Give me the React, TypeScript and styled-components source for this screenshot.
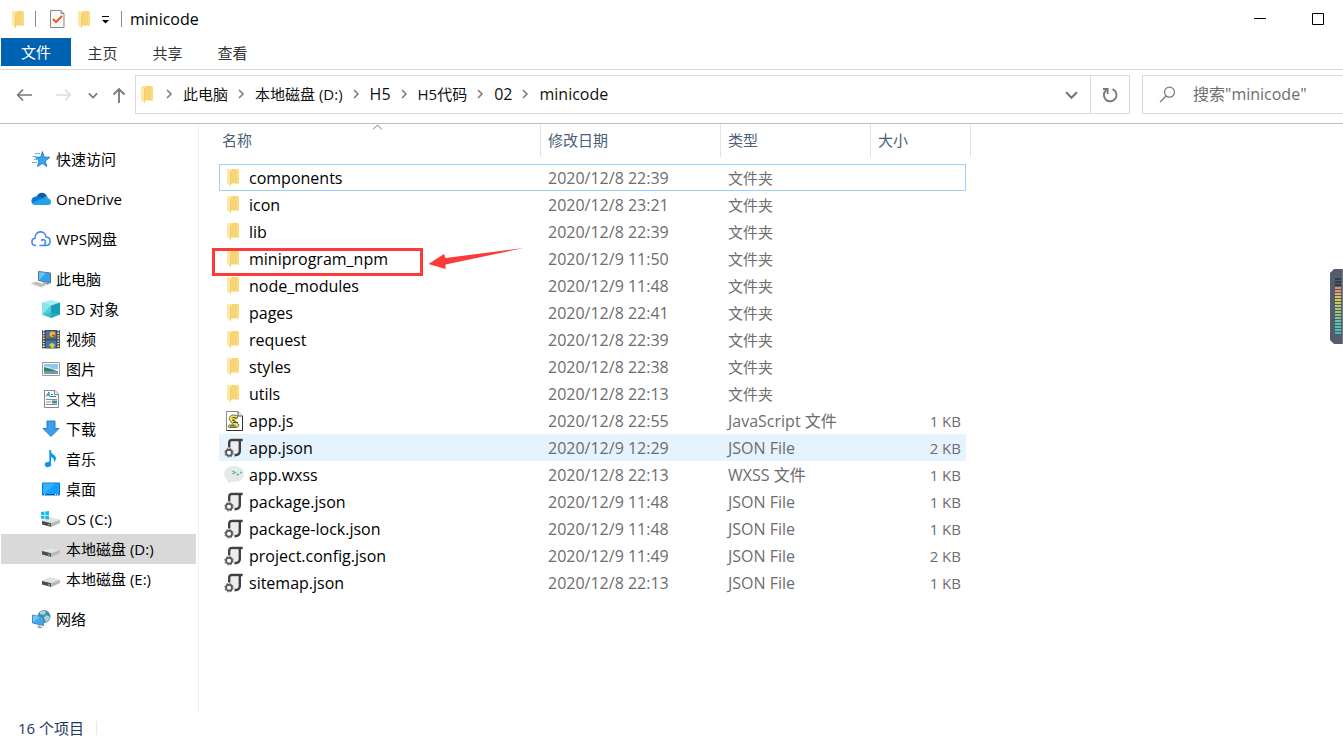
import React from "react";
import styled, { createGlobalStyle } from "styled-components";

const GlobalStyle = createGlobalStyle`
  * { box-sizing: border-box; }
  html, body { margin: 0; background: #fff; overflow: hidden; }
  body, button, input {
    font-family: "Open Sans", "Noto Sans CJK SC", sans-serif;
    font-size: 15px;
    line-height: 20px;
    color: #000;
  }
  button { border: 0; background: none; padding: 0; }
`;

const Window = styled.div`
  position: relative;
  display: flex;
  flex-direction: column;
  min-height: 100vh;
  background: #fff;
`;

const TitleBar = styled.header`
  display: flex;
  align-items: center;
  height: 38px;
  padding-left: 12px;
`;

const QuickTools = styled.div`
  display: flex;
  align-items: center;
  gap: 11px;
`;

const Separator = styled.span<{ $light?: boolean }>`
  width: 1px;
  height: ${(p) => (p.$light ? 14 : 16)}px;
  background: ${(p) => (p.$light ? "#e8e8e8" : "#8a8a8a")};
`;

const Title = styled.h1`
  margin: 0 auto 0 8px;
  font-size: 16px;
  font-weight: 400;
  line-height: 20px;
`;

const WindowButtons = styled.div`
  display: flex;
  gap: 8px;
`;

const WindowButton = styled.button`
  display: flex;
  align-items: center;
  justify-content: center;
  width: 50px;
  height: 38px;
`;

const Ribbon = styled.nav`
  display: flex;
  height: 32px;
  padding-left: 1px;
  border-bottom: 1px solid #d9d9d9;
`;

const RibbonTab = styled.button<{ $primary?: boolean }>`
  width: ${(p) => (p.$primary ? 70 : 65)}px;
  height: 28px;
  padding: ${(p) => (p.$primary ? "0" : "2px 2px 0 0")};
  background: ${(p) => (p.$primary ? "#0063b1" : "transparent")};
  color: ${(p) => (p.$primary ? "#fff" : "#333")};
`;

const AddressRow = styled.div`
  display: flex;
  align-items: center;
  height: 54px;
  padding: 0 0 4px 14px;
  border-bottom: 1px solid #bcbcbc;
`;

const NavButtons = styled.div`
  display: flex;
  align-items: center;
  gap: 12px;
  width: 121px;
`;

const IconButton = styled.button`
  display: flex;
  align-items: center;
  justify-content: center;
`;

const AddressBox = styled.div`
  display: flex;
  align-items: center;
  flex: 1;
  height: 39px;
  border: 1px solid #d9d9d9;
  padding-left: 5px;
`;

const Crumbs = styled.ol`
  display: flex;
  align-items: center;
  flex: 1;
  margin: 0;
  padding: 0 0 2px 3px;
  list-style: none;
`;

const Crumb = styled.li<{ $latin?: boolean }>`
  display: flex;
  align-items: center;
  font-size: ${(p) => (p.$latin ? 16 : 15)}px;
  svg { margin: 0 10px 0 9px; }
`;

const CrumbLink = styled.a`
  color: #111;
  text-decoration: none;
`;

const DropButton = styled(IconButton)`
  width: 38px;
  height: 37px;
`;

const RefreshButton = styled(IconButton)`
  width: 39px;
  height: 37px;
  border-left: 1px solid #d9d9d9;
`;

const SearchBox = styled.label`
  display: flex;
  align-items: center;
  gap: 17px;
  width: 201px;
  height: 39px;
  margin-left: 12px;
  padding-left: 16px;
  border: 1px solid #d9d9d9;
  border-right: 0;
`;

const SearchInput = styled.input`
  flex: 1;
  min-width: 0;
  padding: 0 0 2px;
  border: 0;
  outline: 0;
  background: none;
  font-size: 16px;
  &::placeholder { color: #6d6d6d; opacity: 1; }
`;

const Body = styled.div`
  display: flex;
  flex: 1;
`;

const Sidebar = styled.nav`
  width: 199px;
  padding: 20px 2px 0 1px;
  border-right: 1px solid #f0f0f0;
`;

const NavList = styled.ul`
  margin: 0;
  padding: 0;
  list-style: none;
`;

const NavItem = styled.li<{ $group?: boolean }>`
  margin-bottom: ${(p) => (p.$group ? 10 : 0)}px;
`;

const NavLink = styled.a<{ $level: number; $active?: boolean }>`
  display: flex;
  align-items: center;
  gap: 5px;
  height: 30px;
  padding-left: ${(p) => (p.$level ? 40 : 30)}px;
  background: ${(p) => (p.$active ? "#d9d9d9" : "transparent")};
  color: #000;
  text-decoration: none;
`;

const Content = styled.main`
  flex: 1;
  padding-left: 20px;
`;

const FileTable = styled.table`
  width: 747px;
  table-layout: fixed;
  border-collapse: separate;
  border-spacing: 0;
`;

const Col = styled.col<{ $w: number }>`
  width: ${(p) => p.$w}px;
`;

const HeadCell = styled.th<{ $first?: boolean; $last?: boolean }>`
  position: relative;
  height: 40px;
  padding: 0 0 8px ${(p) => (p.$first ? 3 : 7)}px;
  font-weight: 400;
  text-align: left;
  color: #4c607a;
  &::after {
    content: "";
    position: absolute;
    top: 0;
    right: ${(p) => (p.$last ? -5 : 0)}px;
    width: 1px;
    height: 33px;
    background: #e2e2e2;
  }
`;

const SortMark = styled.svg`
  position: absolute;
  top: 0;
  left: 153px;
`;

const Row = styled.tr<{ $focused?: boolean; $hover?: boolean }>`
  background: ${(p) => (p.$hover ? "#e5f3ff" : "transparent")};
  outline: ${(p) => (p.$focused ? "1px solid #99d1ff" : "none")};
  outline-offset: -1px;
`;

const Cell = styled.td<{ $large?: boolean; $right?: boolean }>`
  position: relative;
  height: 27px;
  padding: ${(p) => (p.$right ? "0 5px 0 0" : "0 0 0 7px")};
  font-size: ${(p) => (p.$large ? 16 : 15)}px;
  text-align: ${(p) => (p.$right ? "right" : "left")};
  color: #6d6d6d;
`;

const NameCell = styled(Cell)`
  padding: 0 0 0 5px;
  color: #000;
`;

const FileName = styled.div`
  display: flex;
  align-items: center;
  gap: 5px;
  height: 27px;
`;

const MarkBox = styled.div`
  position: absolute;
  z-index: 1;
  top: 3px;
  left: -7px;
  width: 211px;
  height: 28px;
  border: 3px solid #fb3a3a;
`;

const MarkArrow = styled.svg`
  position: absolute;
  z-index: 1;
  top: 2px;
  left: 209px;
`;

const StatusBar = styled.footer`
  display: flex;
  align-items: center;
  gap: 12px;
  height: 31px;
  padding: 0 0 2px 18px;
  color: #1e395b;
`;

const LevelMeter = styled.aside`
  position: absolute;
  top: 269px;
  right: 0;
`;

const FolderShape = () => (
  <>
    <path d="M4 0H10.5L12 1.5V14.5H4z" fill="#f8d574" />
    <path d="M10 0H11.5V9L12 10V14.5H10z" fill="#fbdc85" />
    <path d="M0 0H5L4 2.5V17L0 14.5z" fill="#fde8a8" />
    <path d="M4 2.5V17L3.2 16.6V2z" fill="#efc766" />
  </>
);

const Folder = () => (
  <svg width="12" height="17" viewBox="0 0 12 17"><FolderShape /></svg>
);

type FileKind = "folder" | "js" | "json" | "wxss";

const FileIcon = ({ kind }: { kind: FileKind }) => (
  <svg width="20" height="20" viewBox="0 0 20 20">
    {kind === "folder" && <g transform="translate(3 1)"><FolderShape /></g>}
    {kind === "js" && (
      <>
        <path d="M2.5 .5H14L18.5 5V19.5H2.5z" fill="#fff" stroke="#8a8a8a" />
        <path d="M18.5 5V19.5H2.5" fill="none" stroke="#333" />
        <path d="M14 .5V5H18.5" fill="#eee" stroke="#555" />
        <path d="M6 5.5C7 3.5 12 3.5 14 5.5L12.5 8C10 7 9 8 10 9.5L14.5 13C15.5 15 14 16.5 12 16.5H5C4 16.5 4 14 5.5 14H9.5L6 9.5C5 8 5 7 6 5.5z" fill="#ece44e" stroke="#6d6b39" />
        <path d="M8.5 6.5L12.5 7M8 9L12 10.5M9 11.5H14M6 15H12" stroke="#4d4c38" fill="none" />
      </>
    )}
    {kind === "json" && (
      <>
        <path d="M6.5 4H15V15L11 17L6.5 11z" fill="#ededf0" />
        <path d="M5.2 9.5V5Q5.2 2 8.2 2H18.7M15.8 2.5V13Q15.8 17 10.5 17.2" fill="none" stroke="#414141" strokeWidth="2.4" />
        <circle cx="5" cy="14.7" r="3" fill="#fff" stroke="#5a5a5a" strokeWidth="1.9" />
        <circle cx="5" cy="14.7" r="4.3" fill="none" stroke="#6a6a6a" strokeWidth="1" strokeDasharray="1.7 1.68" />
      </>
    )}
    {kind === "wxss" && (
      <>
        <path d="M10 1C15.5 1 20 3.8 20 9C20 14 15.5 17 10 17Q8.5 17 7 16.7L3.5 18.5V15C1.5 13.7 0 11.5 0 9C0 4 4.5 1 10 1z" fill="#e8e8e8" />
        <path d="M8.5 6L11 7.5L8.5 9M12.5 9.5H15M16 7.5H18" fill="none" stroke="#35c98a" strokeWidth="1.4" />
      </>
    )}
  </svg>
);

const Chevron = () => (
  <svg width="8" height="10" viewBox="0 0 8 10">
    <path d="M2 1L6 5L2 9" fill="none" stroke="#777" strokeWidth="1.5" />
  </svg>
);

const DownChevron = ({ size }: { size: number }) => (
  <svg width={size} height={size} viewBox="0 0 12 12">
    <path d="M1 4L6 9L11 4" fill="none" stroke="#777" strokeWidth="2" />
  </svg>
);

const Drive = () => (
  <>
    <path d="M1 12L9 8.5L19 11V14L10.5 18L1 15.5z" fill="#b9b9b9" />
    <path d="M1 12L9 8.5L19 11L10 14.3z" fill="#e2e2e2" />
    <path d="M1 12L10 14.3V17.8L1 15.4z" fill="#4c4c4c" />
    <path d="M7 15.5L9 16" stroke="#47d147" strokeWidth="1.5" />
  </>
);

type NavKind =
  | "star" | "onedrive" | "wps" | "pc" | "cube" | "video" | "picture" | "doc"
  | "download" | "music" | "desktop" | "os" | "drive" | "network";

const navArt: Record<NavKind, React.ReactNode> = {
  star: (
    <>
      <path d="M11.5 2.5L13.2 8L19 8.3L14.3 12L16 17.5L11.3 14.5L6.5 17.5L8 12L4.5 8.3L9.7 8z" fill="#36a3ea" stroke="#1779c4" strokeWidth=".8" />
      <path d="M4 4.5H9M1.5 7.5H5M3 10.5H7M1 13.5H6" stroke="#58b5ee" strokeWidth="1" />
    </>
  ),
  onedrive: (
    <>
      <path d="M5.5 8C7 3 14 2 16 7.5L11 12z" fill="#0a5cad" />
      <path d="M5 7.5C7.5 6.5 9.5 8 13 10L5 16H4C-1 15.5-1 8 5 7.5z" fill="#0f78d4" />
      <path d="M12 9.5C14 6.5 17 7 17.5 9.5C21 10 21 16 17 16H4.5C3 16 2 15 1.5 14z" fill="#28a8ea" />
      <path d="M11 9L20 13.5Q19.5 16 17 16H4.5L1.5 14z" fill="#1f9be6" opacity=".6" />
    </>
  ),
  wps: (
    <path d="M5.2 16.5H4.5C-.2 16.3-.2 9.8 4 9.3C3.8 1 14.5 1 15 8C20.5 8.2 20.5 16.5 15 16.5H8.5M10 11.5C13.5 8.8 16 13 13.2 16.2" fill="none" stroke="#4986f3" strokeWidth="1.6" />
  ),
  pc: (
    <>
      <path d="M7.5 2.5L19.5 4V14L7.5 11.5z" fill="#30a4f2" stroke="#60717e" />
      <path d="M8 3L15 4L8 11z" fill="#66c2fa" />
      <path d="M12 13V14.5L17 16L18.5 14.5L15 13.5" fill="#9aa4aa" />
      <path d="M.5 14.5L5 13L14.5 16L10.5 18z" fill="#d5dadd" stroke="#aeb5b9" strokeWidth=".6" />
      <path d="M3 14.3L11 17M5 13.6L13 16.2" stroke="#929a9f" strokeWidth=".6" />
    </>
  ),
  cube: (
    <>
      <path d="M1 3.5L10 1L19 3.5L10 6.5z" fill="#a8edf4" />
      <path d="M1 3.5L10 6.5V19L1 15.5z" fill="#53cddb" />
      <path d="M1 3.5L10 6.5L1 15.5z" fill="#8ae4ed" />
      <path d="M10 6.5L19 3.5V15.5L10 19z" fill="#169fb6" />
      <path d="M10 13L19 15.5L10 19L1 15.5z" fill="#2cb5c8" opacity=".6" />
    </>
  ),
  video: (
    <>
      <path d="M1 1H19V19.5H1z" fill="#4a4a4a" />
      <path d="M2.7 1V20M17.3 1V20" stroke="#eee" strokeWidth="1.8" strokeDasharray="1.3 1.3" />
      <path d="M5 2H15V10H5zM5 11.5H15V19H5z" fill="#3b73c9" />
      <circle cx="11.5" cy="5.3" r="2.8" fill="#e8c829" />
      <circle cx="7" cy="7.3" r="1.5" fill="#df4634" />
      <path d="M8 16Q11 12 14 16L12 19H10z" fill="#e8c829" />
      <path d="M5 9H15M5 18H10" stroke="#398452" strokeWidth="1.5" />
      <circle cx="12.5" cy="6.5" r="1.3" fill="#d63d35" />
    </>
  ),
  picture: (
    <>
      <path d="M1.5 3.5H18.5V16.5H1.5z" fill="#fff" stroke="#999" />
      <path d="M3 5H17V15H3z" fill="#8bc8ee" />
      <path d="M3 7L8 8L12 10H17V12H3z" fill="#d9eff4" />
      <path d="M3 8Q9 9 17 12.5H3z" fill="#397c6b" />
      <path d="M3 12H17V15H3z" fill="#7199a8" />
    </>
  ),
  doc: (
    <>
      <path d="M3.5 1.5H14L17.5 5V18.5H3.5z" fill="#fff" stroke="#888" />
      <path d="M13.5 1.5V5.5H17.5" fill="#e8e8e8" stroke="#888" />
      <path d="M5 7.5L8 3V7.5M6 6H9M10 5.5H12M9 7.5H15" fill="none" stroke="#1583cf" />
      <path d="M5 10.5H16M5 13H10M5 15.5H16" stroke="#898989" />
      <path d="M11 11.5H16V14.5H11z" fill="#438ca1" />
    </>
  ),
  download: (
    <path d="M6 2H14V9.5H18L10 17.5L2 9.5H6z" fill="#3e9ee9" stroke="#277fc5" />
  ),
  music: (
    <>
      <path d="M9.2 1V15" stroke="#0c96ee" strokeWidth="1.8" />
      <path d="M9 1Q9.5 4 13 6Q17 9 13 13.5Q14 9 9 7.5z" fill="#0c96ee" />
      <ellipse cx="7" cy="15.5" rx="3.3" ry="2.6" transform="rotate(-15 7 15.5)" fill="#0c96ee" />
    </>
  ),
  desktop: (
    <>
      <path d="M1.5 4H18.5V16H1.5z" fill="#16a0fa" stroke="#087bd0" />
      <path d="M2 4.5H14L5 14H2z" fill="#35b1ff" />
      <path d="M2 15.5H18" stroke="#075b9c" />
      <path d="M3 15.5H4M14 15.5H15M16 15.5H17" stroke="#fff" />
    </>
  ),
  os: (
    <>
      <Drive />
      <path d="M0 3L3.5 2.5V6H0zM4.3 2.4L8 2V6H4.3zM0 6.8H3.5V10L0 9.6zM4.3 6.8H8V10.5L4.3 10z" fill="#15b7f2" />
    </>
  ),
  drive: <Drive />,
  network: (
    <>
      <circle cx="13" cy="7.5" r="6.5" fill="#478fae" />
      <path d="M9 3Q13 0 15 3L13 6L9 5zM15 6L19 8Q18 12 15 13L13 9z" fill="#acd2db" />
      <path d="M1.5 6L12.5 8.5V16.5L1.5 14z" fill="#37abf1" stroke="#5b879f" />
      <path d="M2 6.5L9 8L2 13z" fill="#6dcafa" />
      <path d="M7 16V18L4 17.5L9 19.5L12 18.5L9 17V16.5" fill="#a1a7aa" />
    </>
  ),
};

const NavIcon = ({ kind }: { kind: NavKind }) => (
  <svg width="20" height="20" viewBox="0 0 20 20">{navArt[kind]}</svg>
);

const places: { label: string; kind: NavKind; level: number; group?: boolean; active?: boolean }[] = [
  { label: "快速访问", kind: "star", level: 0, group: true },
  { label: "OneDrive", kind: "onedrive", level: 0, group: true },
  { label: "WPS网盘", kind: "wps", level: 0, group: true },
  { label: "此电脑", kind: "pc", level: 0 },
  { label: "3D 对象", kind: "cube", level: 1 },
  { label: "视频", kind: "video", level: 1 },
  { label: "图片", kind: "picture", level: 1 },
  { label: "文档", kind: "doc", level: 1 },
  { label: "下载", kind: "download", level: 1 },
  { label: "音乐", kind: "music", level: 1 },
  { label: "桌面", kind: "desktop", level: 1 },
  { label: "OS (C:)", kind: "os", level: 1 },
  { label: "本地磁盘 (D:)", kind: "drive", level: 1, active: true },
  { label: "本地磁盘 (E:)", kind: "drive", level: 1, group: true },
  { label: "网络", kind: "network", level: 0, group: true },
];

const crumbs = ["此电脑", "本地磁盘 (D:)", "H5", "H5代码", "02", "minicode"];

const files: [string, string, string, string, FileKind][] = [
  ["components", "2020/12/8 22:39", "文件夹", "", "folder"],
  ["icon", "2020/12/8 23:21", "文件夹", "", "folder"],
  ["lib", "2020/12/8 22:39", "文件夹", "", "folder"],
  ["miniprogram_npm", "2020/12/9 11:50", "文件夹", "", "folder"],
  ["node_modules", "2020/12/9 11:48", "文件夹", "", "folder"],
  ["pages", "2020/12/8 22:41", "文件夹", "", "folder"],
  ["request", "2020/12/8 22:39", "文件夹", "", "folder"],
  ["styles", "2020/12/8 22:38", "文件夹", "", "folder"],
  ["utils", "2020/12/8 22:13", "文件夹", "", "folder"],
  ["app.js", "2020/12/8 22:55", "JavaScript 文件", "1 KB", "js"],
  ["app.json", "2020/12/9 12:29", "JSON File", "2 KB", "json"],
  ["app.wxss", "2020/12/8 22:13", "WXSS 文件", "1 KB", "wxss"],
  ["package.json", "2020/12/9 11:48", "JSON File", "1 KB", "json"],
  ["package-lock.json", "2020/12/9 11:48", "JSON File", "1 KB", "json"],
  ["project.config.json", "2020/12/9 11:49", "JSON File", "2 KB", "json"],
  ["sitemap.json", "2020/12/8 22:13", "JSON File", "1 KB", "json"],
];

const isLatin = (s: string) => /^[\x20-\x7e]*$/.test(s);

const meterColors = [
  "#353b4b", "#353b4b", "#353b4b", "#e28c5c", "#dd9a58", "#dfb053", "#dcc04e", "#d5ca4c", "#c6cb50",
  "#b4cc58", "#a3ca60", "#94c96c", "#86c878", "#74c888", "#64c79a", "#58c6ab", "#4ec4b4", "#48c2b4", "#3fbeb2",
];

export default function App() {
  return (
    <Window>
      <GlobalStyle />
      <TitleBar>
        <QuickTools>
          <Folder />
          <Separator />
          <IconButton aria-label="属性">
            <svg width="20" height="20" viewBox="0 0 20 20">
              <path d="M3.5 1.5H14L17 4.5V18.5H3.5z" fill="#f7f7f7" stroke="#888" />
              <path d="M14 1.5V4.5H17" fill="none" stroke="#888" />
              <path d="M6 10L9 13L15 7" fill="none" stroke="#ee5b1f" strokeWidth="2" />
            </svg>
          </IconButton>
          <IconButton aria-label="新建文件夹"><Folder /></IconButton>
          <IconButton aria-label="自定义快速访问工具栏">
            <svg width="9" height="9" viewBox="0 0 9 9">
              <path d="M1 1.5H8" stroke="#000" />
              <path d="M1 5H8L4.5 8.5z" />
            </svg>
          </IconButton>
          <Separator />
        </QuickTools>
        <Title>minicode</Title>
        <WindowButtons>
          <WindowButton aria-label="最小化">
            <svg width="12" height="12" viewBox="0 0 12 12"><path d="M0 5.5H12" stroke="#000" /></svg>
          </WindowButton>
          <WindowButton aria-label="最大化">
            <svg width="12" height="12" viewBox="0 0 12 12"><path d="M.5 .5H11.5V11.5H.5z" fill="none" stroke="#000" /></svg>
          </WindowButton>
        </WindowButtons>
      </TitleBar>

      <Ribbon>
        <RibbonTab $primary>文件</RibbonTab>
        <RibbonTab>主页</RibbonTab>
        <RibbonTab>共享</RibbonTab>
        <RibbonTab>查看</RibbonTab>
      </Ribbon>

      <AddressRow>
        <NavButtons>
          <IconButton aria-label="后退">
            <svg width="20" height="16" viewBox="0 0 20 16"><path d="M18 8H4M9 2.5L3.7 8L9 13.5" fill="none" stroke="#777" strokeWidth="1.6" /></svg>
          </IconButton>
          <IconButton aria-label="前进">
            <svg width="30" height="16" viewBox="0 0 30 16"><path d="M10 8H24M19 2.5L24.3 8L19 13.5" fill="none" stroke="#dcdcdc" strokeWidth="1.6" /></svg>
          </IconButton>
          <IconButton aria-label="最近浏览的位置"><DownChevron size={10} /></IconButton>
          <IconButton aria-label="上移">
            <svg width="18" height="18" viewBox="0 0 18 18"><path d="M9 17V3M3.5 8.5L9 3L14.5 8.5" fill="none" stroke="#777" strokeWidth="1.8" /></svg>
          </IconButton>
        </NavButtons>
        <AddressBox>
          <Folder />
          <Crumbs>
            {crumbs.map((c, i) => (
              <Crumb key={i} $latin={isLatin(c)}>
                <Chevron />
                <CrumbLink href="#">{c}</CrumbLink>
              </Crumb>
            ))}
          </Crumbs>
          <DropButton aria-label="以前的位置"><DownChevron size={13} /></DropButton>
          <RefreshButton aria-label="刷新">
            <svg width="18" height="18" viewBox="0 0 18 18">
              <path d="M11.5 3.2A6.3 6.3 0 1 1 5.3 4.1" fill="none" stroke="#777" strokeWidth="1.9" />
              <path d="M2 3H6.6V8" fill="none" stroke="#777" strokeWidth="1.9" />
            </svg>
          </RefreshButton>
        </AddressBox>
        <SearchBox>
          <svg width="17" height="17" viewBox="0 0 17 17">
            <circle cx="10.5" cy="6.2" r="5" fill="none" stroke="#777" strokeWidth="1.2" />
            <path d="M7 10L1 16" stroke="#777" strokeWidth="1.3" />
          </svg>
          <SearchInput aria-label="搜索" placeholder={'搜索"minicode"'} />
        </SearchBox>
      </AddressRow>

      <Body>
        <Sidebar>
          <NavList>
            {places.map((p) => (
              <NavItem key={p.label} $group={p.group}>
                <NavLink href="#" $level={p.level} $active={p.active}>
                  <NavIcon kind={p.kind} />
                  {p.label}
                </NavLink>
              </NavItem>
            ))}
          </NavList>
        </Sidebar>
        <Content>
          <FileTable>
            <colgroup>
              <Col $w={322} /><Col $w={180} /><Col $w={150} /><Col $w={95} />
            </colgroup>
            <thead>
              <tr>
                <HeadCell $first>
                  名称
                  <SortMark width="12" height="7" viewBox="0 0 12 7">
                    <path d="M1 5.5L5.5 1L10 5.5" fill="none" stroke="#777" />
                  </SortMark>
                </HeadCell>
                <HeadCell>修改日期</HeadCell>
                <HeadCell>类型</HeadCell>
                <HeadCell $last>大小</HeadCell>
              </tr>
            </thead>
            <tbody>
              {files.map(([name, date, type, size, kind]) => (
                <Row key={name} $focused={name === "components"} $hover={name === "app.json"}>
                  <NameCell $large>
                    <FileName>
                      <FileIcon kind={kind} />
                      <span>{name}</span>
                    </FileName>
                    {name === "miniprogram_npm" && (
                      <>
                        <MarkBox />
                        <MarkArrow width="98" height="24" viewBox="0 0 98 24">
                          <path d="M.5 17L16 7L17.5 11L96 1L17.5 17.5L17.5 22z" fill="#fb3a3a" />
                        </MarkArrow>
                      </>
                    )}
                  </NameCell>
                  <Cell $large>{date}</Cell>
                  <Cell $large={kind !== "folder"}>{type}</Cell>
                  <Cell $right>{size}</Cell>
                </Row>
              ))}
            </tbody>
          </FileTable>
        </Content>
      </Body>

      <StatusBar>
        16 个项目
        <Separator $light />
      </StatusBar>

      <LevelMeter aria-label="音量">
        <svg width="13" height="75" viewBox="0 0 13 75">
          <path d="M4 0H13V75H4L0 71V4z" fill="#555c6d" />
          <path d="M12.5 0V75" stroke="#777d8b" />
          {meterColors.map((c, i) => (
            <rect key={i} x="5" y={9 + i * 3} width="6" height="2" fill={c} />
          ))}
        </svg>
      </LevelMeter>
    </Window>
  );
}
